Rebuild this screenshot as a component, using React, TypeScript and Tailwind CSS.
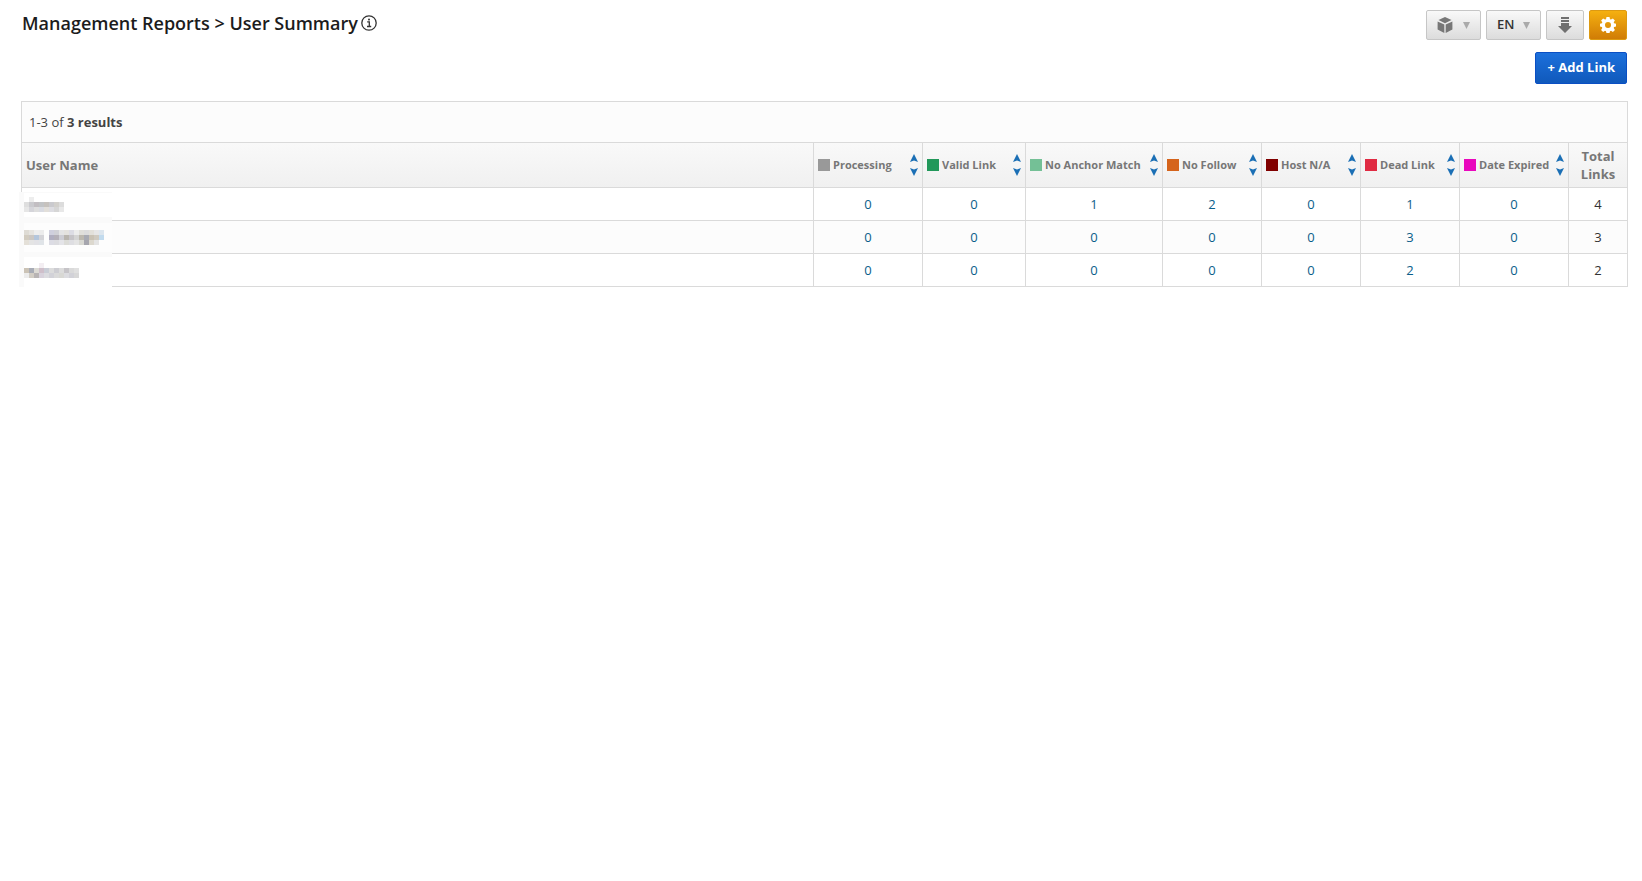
import React from "react";

type Status = { label: string; swatch: string; width: string };

const statuses: Status[] = [
  { label: "Processing", swatch: "bg-[#999999]", width: "w-[109px]" },
  { label: "Valid Link", swatch: "bg-[#22985a]", width: "w-[103px]" },
  { label: "No Anchor Match", swatch: "bg-[#74c096]", width: "w-[137px]" },
  { label: "No Follow", swatch: "bg-[#d5641c]", width: "w-[99px]" },
  { label: "Host N/A", swatch: "bg-[#800000]", width: "w-[99px]" },
  { label: "Dead Link", swatch: "bg-[#e02b43]", width: "w-[99px]" },
  { label: "Date Expired", swatch: "bg-[#e908bd]", width: "w-[109px]" },
];

type Block = [x: number, y: number, color: string];

type User = { id: string; blocks: Block[]; counts: number[]; total: number };

const users: User[] = [
  {
    id: "User 1",
    counts: [0, 0, 1, 2, 0, 1, 0],
    total: 4,
    blocks: [
      [1, 0, "#ededed"],
      [0, 1, "#dedede"], [1, 1, "#cacace"], [2, 1, "#c2bec2"], [3, 1, "#c2c4c6"], [4, 1, "#c6c2be"], [5, 1, "#cacace"], [6, 1, "#d2d0cc"], [7, 1, "#dcdcdc"],
      [0, 2, "#e6e6e6"], [1, 2, "#d5d5da"], [2, 2, "#dedede"], [3, 2, "#d9dbe2"], [4, 2, "#e2dfda"], [5, 2, "#dddde2"], [6, 2, "#d6d6d6"], [7, 2, "#e8e8e8"],
    ],
  },
  {
    id: "User 2",
    counts: [0, 0, 0, 0, 0, 3, 0],
    total: 3,
    blocks: [
      [0, 0, "#dedbd4"], [1, 0, "#e6e4e0"], [2, 0, "#eeeeee"], [3, 0, "#ececec"], [5, 0, "#cfcfdd"], [6, 0, "#d0d0d6"], [7, 0, "#e4e4e4"], [8, 0, "#e4e2de"], [9, 0, "#dcdce4"], [10, 0, "#ececec"], [11, 0, "#e0dfda"], [12, 0, "#dcdcdc"], [13, 0, "#e2e0da"], [14, 0, "#e6e6e6"], [15, 0, "#dde6ee"],
      [0, 1, "#d2ccc0"], [1, 1, "#ccc8c4"], [2, 1, "#b4c6dc"], [3, 1, "#d4d4d8"], [5, 1, "#b0aec0"], [6, 1, "#b4b0b8"], [7, 1, "#cdcdd4"], [8, 1, "#b9b5ae"], [9, 1, "#c6c4c8"], [10, 1, "#d4d4d4"], [11, 1, "#bcb8ae"], [12, 1, "#a8aab2"], [13, 1, "#c9c2b4"], [14, 1, "#cfcac0"], [15, 1, "#c2dbee"],
      [0, 2, "#e4e0d8"], [1, 2, "#e4e4e4"], [2, 2, "#e2e2e6"], [3, 2, "#e0e4e8"], [5, 2, "#dcdce4"], [6, 2, "#dcdce0"], [7, 2, "#e4e4e8"], [8, 2, "#dcdcd8"], [9, 2, "#dedee2"], [10, 2, "#e4e4e4"], [11, 2, "#d8d8d2"], [12, 2, "#a6a6ae"], [13, 2, "#dcd8ce"], [14, 2, "#e4e4e4"],
    ],
  },
  {
    id: "User 3",
    counts: [0, 0, 0, 0, 0, 2, 0],
    total: 2,
    blocks: [
      [3, 0, "#f3eef2"],
      [0, 1, "#cbc3b6"], [1, 1, "#a8acb6"], [2, 1, "#dcdad4"], [3, 1, "#cfbfca"], [4, 1, "#c9cdd6"], [5, 1, "#dcdcdc"], [6, 1, "#cdcdd2"], [7, 1, "#dcdcdc"], [8, 1, "#c6c4c8"], [9, 1, "#dadada"], [10, 1, "#e0e0e0"],
      [0, 2, "#ececec"], [1, 2, "#d2cdc4"], [2, 2, "#b8b4b4"], [3, 2, "#d8d2dc"], [4, 2, "#dcdce0"], [5, 2, "#d2d2d8"], [6, 2, "#dadada"], [7, 2, "#d8d8d4"], [8, 2, "#dcdce0"], [9, 2, "#d2d2d8"], [10, 2, "#d8d8d8"],
    ],
  },
];

function MaskedName({ user }: { user: User }) {
  return (
    <svg role="img" aria-label={user.id} viewBox="0 0 80 15" shapeRendering="crispEdges" className="relative z-10 block h-[15px] w-20">
      {user.blocks.map(([x, y, color]) => (
        <rect key={`${x}-${y}`} x={x * 5} y={y * 5} width="5" height="5" fill={color} />
      ))}
    </svg>
  );
}

function InfoIcon() {
  return (
    <svg viewBox="0 0 16 16" className="size-4" fill="none" stroke="#333" aria-hidden="true">
      <circle cx="8" cy="8" r="7.2" strokeWidth="1.3" />
      <path d="M6.2 6.8h2.1v4.3M6 11.5h4.2" strokeWidth="1.3" />
      <rect x="7.1" y="3.7" width="1.8" height="1.7" fill="#333" stroke="none" />
    </svg>
  );
}

function CubeIcon() {
  return (
    <svg viewBox="0 0 16 16" className="size-4" fill="#777" aria-hidden="true">
      <path d="M8 0 14.500 3.100 8 6.300 1.500 3.100z" />
      <path d="M.6 4.400 7.300 7.600V16L.6 12.600z" />
      <path d="M15.400 4.400 8.700 7.600V16l6.700-3.400z" />
    </svg>
  );
}

function DownloadIcon() {
  return (
    <svg viewBox="0 0 14 16" className="h-4 w-[14px]" fill="#707070" aria-hidden="true">
      <path d="M3 0h8v2H3zM3 3h8v2H3zM3 6h8v3h3l-7 7-7-7h3z" />
    </svg>
  );
}

function GearIcon() {
  return (
    <svg viewBox="0 0 16 16" className="size-4" fill="#fff" aria-hidden="true">
      <path
        fillRule="evenodd"
        d="M6.5 0h3l.5 2.2 1 .4 1.9-1.2 2 2-1.2 1.9.4 1 1.900.5v2.800l-1.900.5-.4 1 1.200 1.900-2 2-1.900-1.200-1 .4-.5 2h-3l-.5-2-1-.4L3.100 15l-2-2 1.200-1.900-.4-1L0 9.600V6.800l1.900-.5.4-1L1.100 3.400l2-2L5 2.600l1-.4zM8 5a3 3 0 1 0 0 6 3 3 0 0 0 0-6z"
      />
    </svg>
  );
}

function Caret() {
  return (
    <svg viewBox="0 0 7 7" className="size-[7px]" fill="#aaa" aria-hidden="true">
      <path d="M0 0h7L3.500 7z" />
    </svg>
  );
}

function SortArrows({ label }: { label: string }) {
  return (
    <span className="flex flex-col gap-[6px]">
      <button type="button" aria-label={`Sort ${label} ascending`} className="cursor-pointer">
        <svg viewBox="0 0 8 8" className="block size-2" fill="#1b6fb5" aria-hidden="true">
          <path d="M4 0 8 8 4 6.500 0 8z" />
        </svg>
      </button>
      <button type="button" aria-label={`Sort ${label} descending`} className="cursor-pointer">
        <svg viewBox="0 0 8 8" className="block size-2" fill="#1b6fb5" aria-hidden="true">
          <path d="M4 8 8 0 4 1.500 0 0z" />
        </svg>
      </button>
    </span>
  );
}

const toolButton =
  "flex h-[30px] cursor-pointer items-center rounded-xs border border-[#c6c6c6] bg-linear-to-b from-[#f9f9f9] to-[#dcdcdc] text-[13px] font-semibold text-[#333]";

export default function App() {
  return (
    <main className="pt-[10px] pr-[14px] pl-[21px] font-['Open_Sans',sans-serif] text-[13px] text-[#444]">
      <header className="flex items-start justify-between pr-px">
        <h1 className="flex items-center gap-[3px] pl-px text-lg leading-[26px] font-semibold text-[#1c1c1c]">
          Management Reports &gt; User Summary
          <InfoIcon />
        </h1>
        <div className="flex flex-col items-end gap-3">
          <div className="flex gap-[5px]">
            <button type="button" aria-label="Modules" className={`${toolButton} w-[55px] justify-between px-[10px]`}>
              <CubeIcon />
              <Caret />
            </button>
            <button type="button" className={`${toolButton} w-[55px] justify-between px-[10px]`}>
              EN
              <Caret />
            </button>
            <button type="button" aria-label="Download" className={`${toolButton} w-[38px] justify-center`}>
              <DownloadIcon />
            </button>
            <button
              type="button"
              aria-label="Settings"
              className="flex h-[30px] w-[38px] cursor-pointer items-center justify-center rounded-xs border border-[#dd9a12] bg-linear-to-b from-[#f5b010] to-[#d07c06]"
            >
              <GearIcon />
            </button>
          </div>
          <button
            type="button"
            className="h-8 cursor-pointer rounded-xs border border-[#0a4fc4] bg-linear-to-b from-[#1c70dc] to-[#1059bb] px-[11px] text-[13px] font-bold text-white"
          >
            + Add Link
          </button>
        </div>
      </header>

      <section className="relative mt-[17px] border-t border-l border-[#dadada]">
        <p className="flex h-[41px] items-center border-r border-b border-[#dadada] bg-[#fcfcfc] pt-[2px] pl-[7px]">
          <span>
            1-3 of <b>3 results</b>
          </span>
        </p>
        <table className="w-full table-fixed border-separate border-spacing-0">
          <thead className="text-[#777]">
            <tr className="h-[45px] bg-linear-to-b from-[#f9f9f9] to-[#f0f0f0]">
              <th scope="col" className="border-r border-b border-[#dadada] pt-[2px] pl-1 text-left font-bold">
                User Name
              </th>
              {statuses.map((s) => (
                <th key={s.label} scope="col" className={`${s.width} border-r border-b border-[#dadada] px-1 text-[11px] font-bold`}>
                  <span className="flex items-center justify-between">
                    <span className="flex items-center gap-[3px] whitespace-nowrap">
                      <span className={`size-3 ${s.swatch}`} />
                      {s.label}
                    </span>
                    <SortArrows label={s.label} />
                  </span>
                </th>
              ))}
              <th scope="col" className="w-[59px] border-r border-b border-[#dadada] text-center leading-[18px] font-bold">
                Total Links
              </th>
            </tr>
          </thead>
          <tbody>
            {users.map((u) => (
              <tr key={u.id} className="h-[33px] even:bg-[#fcfcfc]">
                <td className="border-r border-b border-[#dadada] pl-[2px]">
                  <MaskedName user={u} />
                </td>
                {u.counts.map((n, i) => (
                  <td key={statuses[i].label} className="border-r border-b border-[#dadada] pt-[2px] text-center">
                    <a href="#" className="text-[#0b5e8a]">
                      {n}
                    </a>
                  </td>
                ))}
                <td className="border-r border-b border-[#dadada] pt-[2px] text-center text-[#333]">{u.total}</td>
              </tr>
            ))}
          </tbody>
        </table>
        {/* Masking patch that hides the name column's rules behind the blocks */}
        <div
          aria-hidden="true"
          className="pointer-events-none absolute -bottom-1 -left-[3px] flex h-[99px] w-[93px] flex-col justify-between bg-[#fafafa] pt-px pb-1 pl-[5px]"
        >
          <div className="h-6 bg-white" />
          <div className="h-[29px] bg-[#fdfdfd]" />
          <div className="h-[30px] bg-white" />
        </div>
      </section>
    </main>
  );
}
